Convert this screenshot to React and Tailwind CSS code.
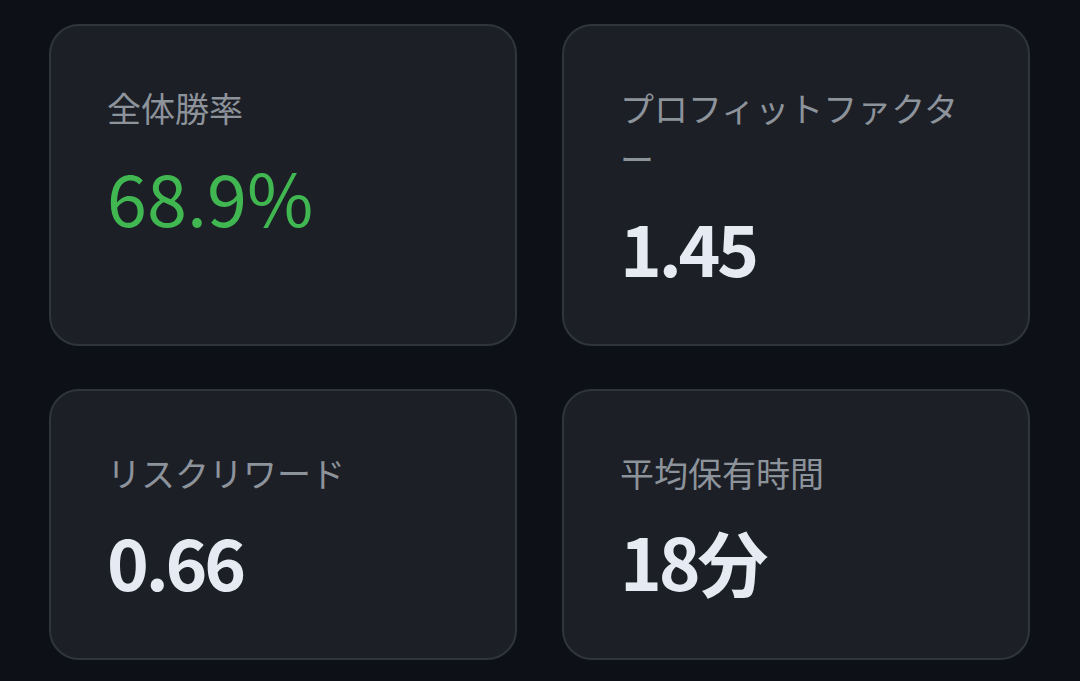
const stats = [
  { label: "全体勝率", value: "68.9%", tone: "green" },
  { label: "プロフィットファクター", value: "1.45" },
  { label: "リスクリワード", value: "0.66" },
  { label: "平均保有時間", value: "18分" },
];

function StatCard({ label, value, tone }) {
  return (
    <div className="rounded-[30px] border-2 border-[#30353d] bg-[#1c1f26] px-14 pt-14 pb-[62px]">
      <div className="text-[34px] leading-[51px] text-[#8d939b]">{label}</div>
      <div
        className={
          tone === "green"
            ? "mt-[27px] text-[72px] leading-none font-normal text-[#40b750]"
            : "mt-[27px] text-[71px] leading-none font-bold tracking-[-0.045em] text-[#e6ebf3]"
        }
      >
        {value}
      </div>
    </div>
  );
}

export default function App() {
  return (
    <div
      className="min-h-screen bg-[#0d1016] pt-[24px] pl-[49px] pr-[50px]"
      style={{ fontFamily: '"Noto Sans CJK JP", "Noto Sans", sans-serif' }}
    >
      <div className="grid grid-cols-2 gap-x-[45px] gap-y-[43px]">
        {stats.map((s, i) => (
          <StatCard key={i} {...s} />
        ))}
      </div>
    </div>
  );
}
